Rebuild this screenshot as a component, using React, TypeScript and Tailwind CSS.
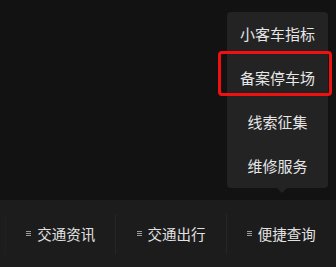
import { Fragment } from 'react';

const menuItems = ['小客车指标', '备案停车场', '线索征集', '维修服务'];
const tabs = ['交通资讯', '交通出行', '便捷查询'];

function MenuGlyph() {
  return (
    <span className="flex flex-col gap-[1px] w-[5px] mr-[6px]">
      <span className="h-px bg-[#9a9a9a]" />
      <span className="h-px bg-[#9a9a9a]" />
      <span className="h-px bg-[#9a9a9a]" />
    </span>
  );
}

export default function App() {
  return (
    <div
      className="relative w-[336px] h-[267px] bg-[#121212] flex flex-col overflow-hidden"
      style={{ fontFamily: '"Noto Sans CJK SC", "Noto Sans", sans-serif' }}
    >
      <div className="flex-1" />

      {/* popup menu */}
      <div className="absolute left-[227px] top-[12px] w-[101px] rounded-[4px] bg-[#232323] flex flex-col">
        {menuItems.map((m) => (
          <div
            key={m}
            className="h-[44px] flex items-center justify-center text-[15px] text-[#e6e6e6]"
          >
            {m}
          </div>
        ))}
        <div className="absolute left-[50px] -bottom-[5px] w-0 h-0 border-l-[5px] border-r-[5px] border-t-[5px] border-l-transparent border-r-transparent border-t-[#232323]" />
      </div>

      {/* highlight box */}
      <div className="absolute left-[218px] top-[51px] w-[114px] h-[45px] rounded-[4px] border-[3px] border-[#f01010]" />

      {/* bottom tab bar */}
      <div className="h-[67px] bg-[#1c1c1c] flex items-center pl-[5px]">
        <div className="w-px h-[40px] bg-[#202020]" />
        {tabs.map((t, i) => (
          <Fragment key={t}>
            {i > 0 && <div className="w-px h-[40px] bg-[#262626]" />}
            <div className="w-[110px] flex items-center justify-center text-[14.5px] text-[#e2e2e2]">
              <MenuGlyph />
              {t}
            </div>
          </Fragment>
        ))}
      </div>
    </div>
  );
}
